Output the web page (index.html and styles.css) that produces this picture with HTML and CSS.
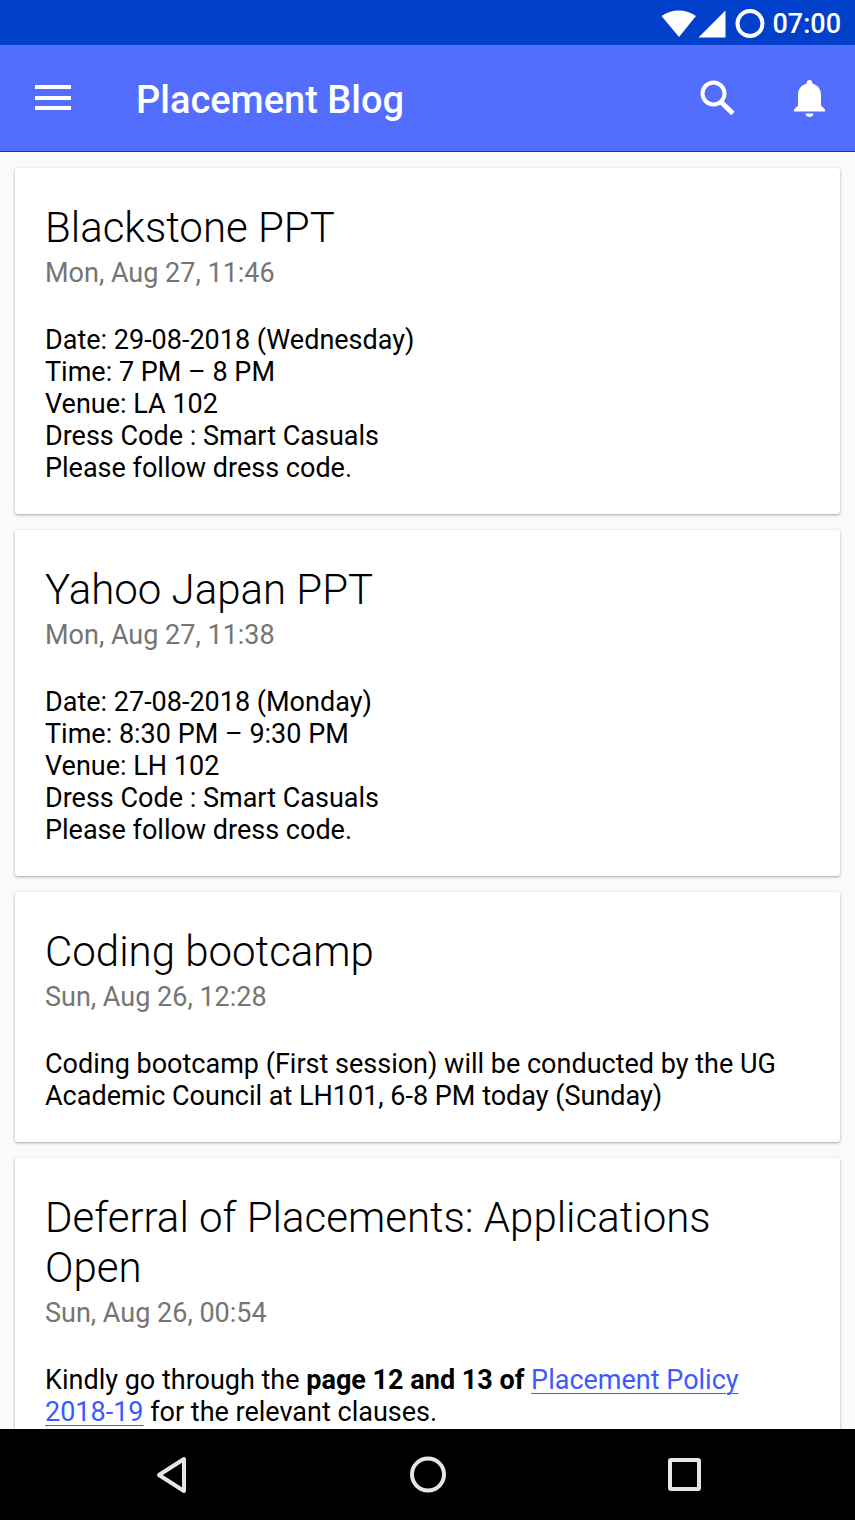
FILE: index.html
```html
<!DOCTYPE html>
<html lang="en">
<head>
<meta charset="utf-8">
<meta name="viewport" content="width=device-width, initial-scale=1">
<title>Placement Blog</title>
<link rel="stylesheet" href="styles.css">
</head>
<body>
<div class="screen">
  <div class="status-bar">
    <svg class="status-icons" width="106" height="30" viewBox="0 0 106 30" fill="#fff" aria-hidden="true">
      <path d="M0.500 7C10 -0.500 25.500 -0.500 35 7L18 28Z"/>
      <path d="M64.500 1.500V28.500H37.500Z"/>
      <circle cx="89" cy="14.500" r="12.500" fill="none" stroke="#fff" stroke-width="4"/>
    </svg>
    <span class="clock">07:00</span>
  </div>
  <header class="app-bar">
    <button class="icon-button" type="button" aria-label="Menu">
      <svg width="36" height="36" viewBox="0 0 36 36" fill="#fff"><path d="M0 5h36v4H0zM0 16h36v4H0zM0 26h36v4H0z"/></svg>
    </button>
    <h1 class="app-title">Placement Blog</h1>
    <button class="icon-button" type="button" aria-label="Search">
      <svg width="36" height="36" viewBox="0 0 36 36" fill="none" stroke="#fff"><circle cx="14.500" cy="13.500" r="11" stroke-width="4"/><path d="M22.500 22.500L34 33.500" stroke-width="5"/></svg>
    </button>
    <button class="icon-button" type="button" aria-label="Notifications">
      <svg width="32" height="38" viewBox="0 0 32 38" fill="#fff"><path d="M16.500 1C14.500 1 13.700 2.500 13.700 4.500C8 6 5 10.500 5 16V26.500L1 30.500V32.500H32V30.500L28 26.500V16C28 10.500 25 6 19.300 4.500C19.300 2.500 18.500 1 16.500 1ZM12.500 34.500H20.500C20.500 36.500 18.500 38 16.500 38S12.500 36.500 12.500 34.500Z"/></svg>
    </button>
  </header>
  <main class="feed">
    <article class="card">
      <h2 class="card-title">Blackstone PPT</h2>
      <p class="card-date">Mon, Aug 27, 11:46</p>
      <p class="card-body">Date: 29-08-2018 (Wednesday)<br>Time: 7 PM – 8 PM<br>Venue: LA 102<br>Dress Code : Smart Casuals<br>Please follow dress code.</p>
    </article>
    <article class="card">
      <h2 class="card-title">Yahoo Japan PPT</h2>
      <p class="card-date">Mon, Aug 27, 11:38</p>
      <p class="card-body">Date: 27-08-2018 (Monday)<br>Time: 8:30 PM – 9:30 PM<br>Venue: LH 102<br>Dress Code : Smart Casuals<br>Please follow dress code.</p>
    </article>
    <article class="card">
      <h2 class="card-title">Coding bootcamp</h2>
      <p class="card-date">Sun, Aug 26, 12:28</p>
      <p class="card-body">Coding bootcamp (First session) will be conducted by the UG Academic Council at LH101, 6-8 PM today (Sunday)</p>
    </article>
    <article class="card">
      <h2 class="card-title">Deferral of Placements: Applications Open</h2>
      <p class="card-date">Sun, Aug 26, 00:54</p>
      <p class="card-body">Kindly go through the <strong>page 12 and 13 of</strong> <a class="link" href="#policy">Placement Policy 2018-19</a> for the relevant clauses.</p>
    </article>
  </main>
  <nav class="nav-bar" aria-label="System">
    <button class="nav-button" type="button" aria-label="Back">
      <svg width="36" height="40" viewBox="0 0 36 40"><path d="M30 4V36L5 20Z"/></svg>
    </button>
    <button class="nav-button" type="button" aria-label="Home">
      <svg width="36" height="40" viewBox="0 0 36 40"><circle cx="18" cy="19.500" r="16"/></svg>
    </button>
    <button class="nav-button" type="button" aria-label="Recent apps">
      <svg width="36" height="40" viewBox="0 0 36 40"><rect x="4" y="5" width="29" height="29" rx="1"/></svg>
    </button>
  </nav>
</div>
</body>
</html>
```
FILE: styles.css
```css
* { box-sizing: border-box; }

body {
  margin: 0;
  font-family: Roboto, "Liberation Sans", sans-serif;
  background: #fafafa;
  color: #000;
}

button {
  border: 0;
  padding: 0;
  background: none;
  cursor: pointer;
}

svg { display: block; }

.screen {
  display: flex;
  flex-direction: column;
  height: 100vh;
}

.status-bar {
  display: flex;
  flex: none;
  justify-content: flex-end;
  align-items: center;
  gap: 5px;
  height: 45px;
  padding: 2px 14px 0 0;
  background: #0040ca;
  color: #fff;
}

.clock {
  font-size: 27px;
  font-weight: 500;
  line-height: 32px;
}

.app-bar {
  display: flex;
  flex: none;
  align-items: center;
  height: 107px;
  padding: 0 22px 0 29px;
  border-bottom: 1px solid #0a32d8;
  background: #536dfe;
}

.icon-button {
  display: flex;
  justify-content: center;
  align-items: center;
  width: 48px;
  height: 48px;
}

.icon-button + .icon-button { margin-left: 44px; }

.app-title {
  flex: 1;
  margin: 0 0 0 59px;
  padding-top: 4px;
  font-size: 38px;
  font-weight: 500;
  line-height: 46px;
  color: #fff;
}

.feed {
  display: flex;
  flex: 1;
  flex-direction: column;
  gap: 16px;
  min-height: 0;
  padding: 16px 15px;
  overflow: hidden;
}

.card {
  flex: none;
  padding: 35px 30px 30px;
  border-radius: 3px;
  background: #fff;
  box-shadow: 0 1px 3px rgba(0, 0, 0, 0.35);
}

.card-title {
  margin: 0;
  font-size: 42px;
  font-weight: 300;
  line-height: 50px;
}

.card-date {
  margin: 0 0 31px;
  font-size: 27px;
  line-height: 40px;
  color: #757575;
}

.card-body {
  margin: 0;
  font-size: 27px;
  line-height: 32px;
}

.link {
  color: #3d5afe;
  text-underline-offset: 4px;
  text-decoration-thickness: 1px;
}

.nav-bar {
  display: flex;
  flex: none;
  justify-content: center;
  align-items: center;
  gap: 220px;
  height: 91px;
  background: #000;
}

.nav-button svg {
  fill: none;
  stroke: #e6e6e6;
  stroke-width: 4;
  stroke-linejoin: round;
}
```
